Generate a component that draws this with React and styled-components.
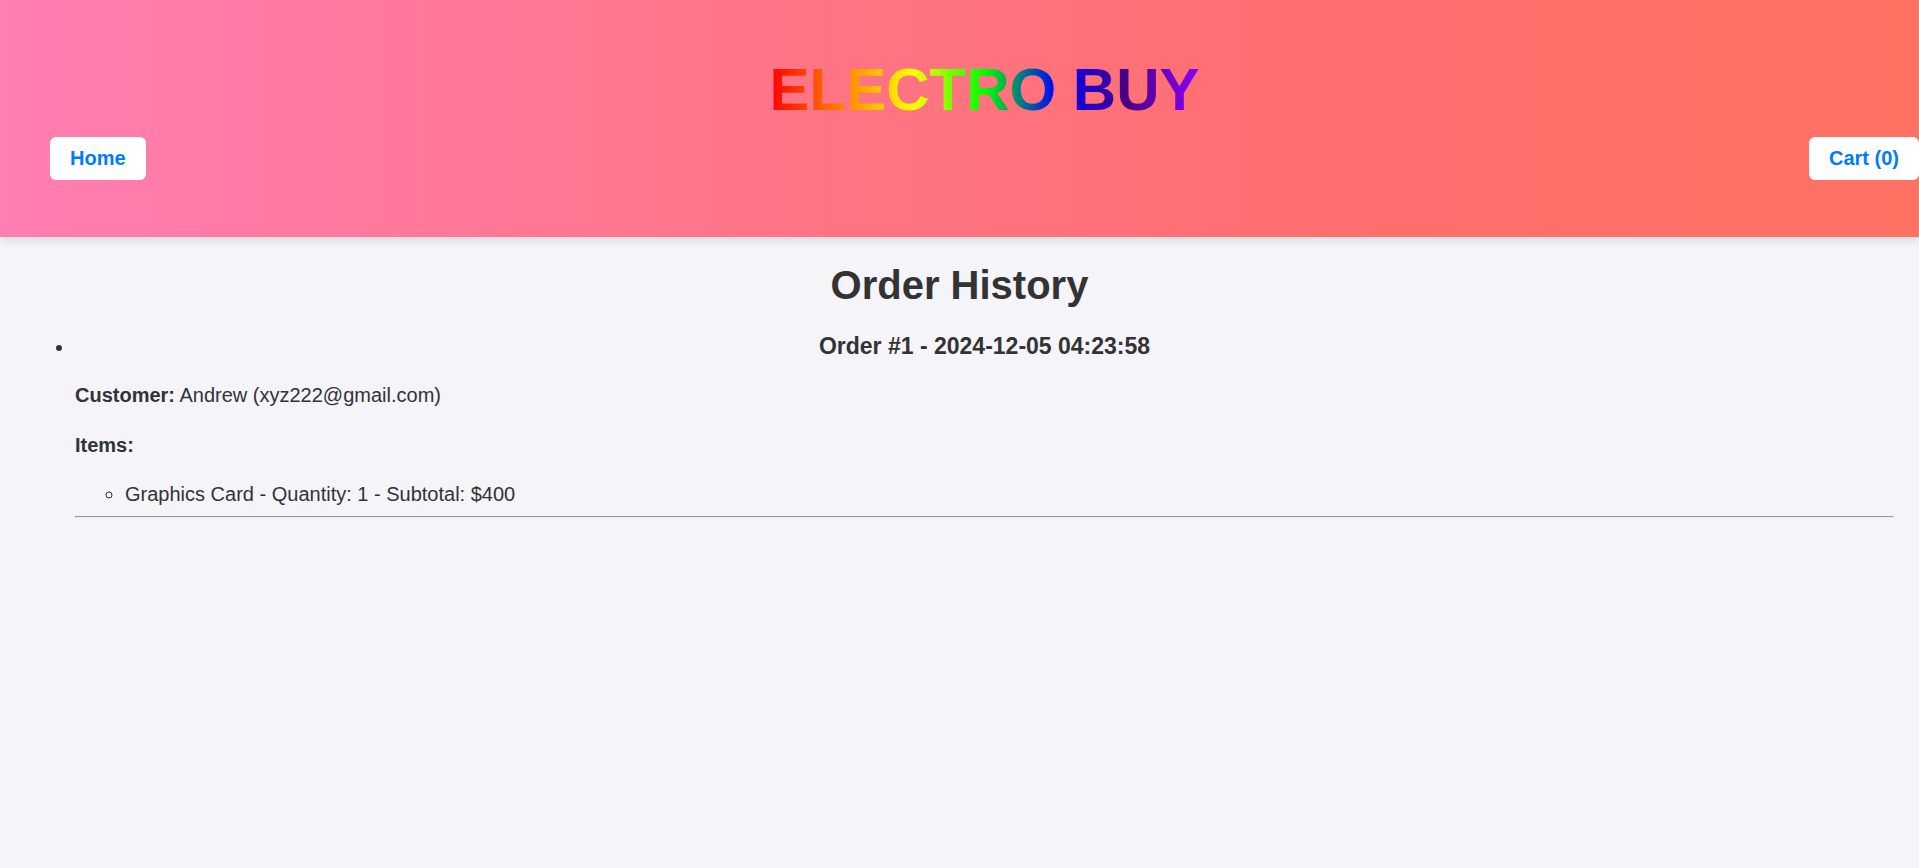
import React from "react";
import styled, { createGlobalStyle } from "styled-components";

const GlobalStyle = createGlobalStyle`
  * { box-sizing: border-box; }
  body {
    margin: 0;
    background: #f4f4f9;
    color: #333;
    font: 20px/1.5 "Liberation Sans", Arial, sans-serif;
  }
`;

const Header = styled.header`
  padding: 50px 0 57px 50px;
  background: linear-gradient(to right, #ff7eb3, #ff758c 35%, #ff6e6e 70%, #ff7163);
  box-shadow: 0 4px 8px rgba(0, 0, 0, 0.1);
`;

const Brand = styled.h1`
  width: fit-content;
  margin: 0 auto 7px;
  font-size: 60px;
  line-height: 80px;
  color: transparent;
  background: linear-gradient(to right, red, #ff7f00, yellow, lime, blue, indigo, #8b00ff);
  background-clip: text;
`;

const Nav = styled.nav`
  display: flex;
  justify-content: space-between;
`;

const NavLink = styled.a`
  padding: 10px 20px;
  border-radius: 6px;
  background: #fff;
  color: #007bff;
  font-weight: bold;
  line-height: 23px;
  text-decoration: none;
`;

const Main = styled.main`
  padding: 20px 25px;
`;

const Title = styled.h2`
  margin: 0;
  font-size: 40px;
  line-height: 56px;
  text-align: center;
`;

const Orders = styled.ul`
  margin: 19px 0;
  padding-left: 50px;
`;

const OrderTitle = styled.h3`
  margin: 0 0 20px;
  font-size: 23px;
  line-height: 28px;
  text-align: center;
`;

const Detail = styled.p`
  margin: 20px 0;
  line-height: 30px;
`;

const Items = styled.ul`
  margin: 0;
  padding-left: 50px;
  line-height: 28px;
`;

const Divider = styled.hr`
  margin: 8px 0;
`;

const orders = [
  {
    id: 1,
    date: "2024-12-05 04:23:58",
    customer: "Andrew (xyz222@gmail.com)",
    items: [{ name: "Graphics Card", quantity: 1, subtotal: 400 }],
  },
];

export default function App() {
  return (
    <>
      <GlobalStyle />
      <Header>
        <Brand>ELECTRO BUY</Brand>
        <Nav>
          <NavLink href="#home">Home</NavLink>
          <NavLink href="#cart">Cart (0)</NavLink>
        </Nav>
      </Header>
      <Main>
        <Title>Order History</Title>
        <Orders>
          {orders.map((order) => (
            <li key={order.id}>
              <OrderTitle>{`Order #${order.id} - ${order.date}`}</OrderTitle>
              <Detail><strong>Customer:</strong> {order.customer}</Detail>
              <Detail><strong>Items:</strong></Detail>
              <Items>
                {order.items.map((item) => (
                  <li key={item.name}>{`${item.name} - Quantity: ${item.quantity} - Subtotal: $${item.subtotal}`}</li>
                ))}
              </Items>
              <Divider />
            </li>
          ))}
        </Orders>
      </Main>
    </>
  );
}
